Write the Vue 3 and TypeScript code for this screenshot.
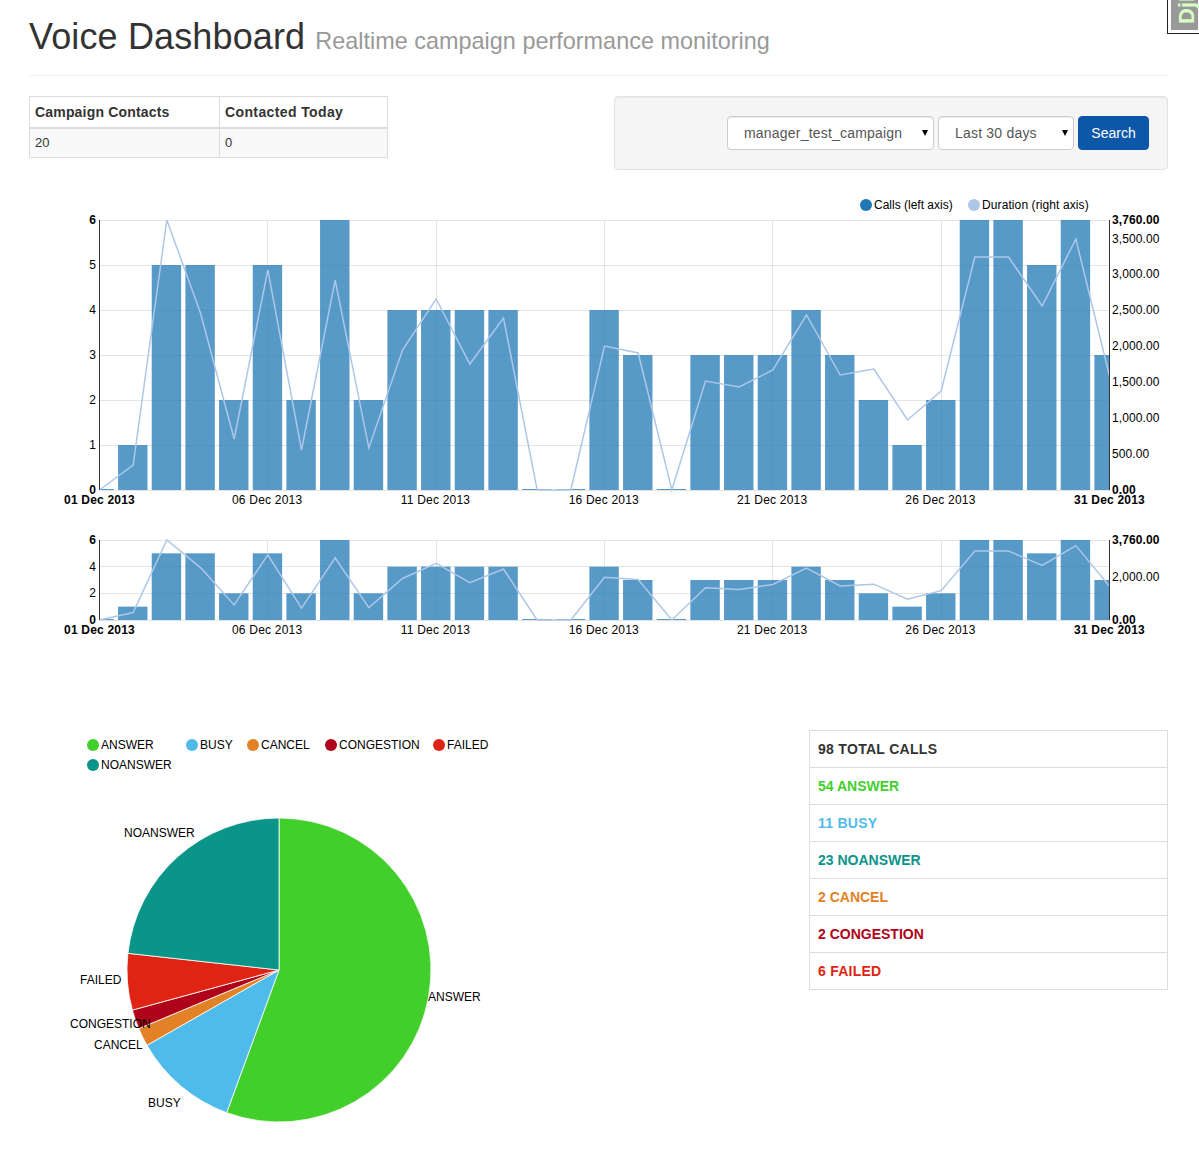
<template>
  <div class="page">
    <!-- debug toolbar handle -->
    <div class="debug-handle"><span class="debug-text">DjDT</span></div>

    <div class="page-header">
      <h1><span class="title">Voice Dashboard</span> <small>Realtime campaign performance monitoring</small></h1>
    </div>

    <div class="top-row">
      <table class="stats">
        <thead>
          <tr>
            <th class="col-a">Campaign Contacts</th>
            <th class="col-b">Contacted Today</th>
          </tr>
        </thead>
        <tbody>
          <tr>
            <td>20</td>
            <td>0</td>
          </tr>
        </tbody>
      </table>

      <form class="well" @submit.prevent>
        <div class="select-wrap">
          <select class="form-control campaign">
            <option>manager_test_campaign</option>
          </select>
        </div>
        <div class="select-wrap">
          <select class="form-control range">
            <option>Last 30 days</option>
          </select>
        </div>
        <button class="btn" type="submit">Search</button>
      </form>
    </div>

    <!-- focus chart -->
    <svg class="chart main-chart" width="1139" height="320" viewBox="29 190 1139 320">
      <defs>
        <clipPath id="mainClip"><rect x="99.5" y="220" width="1010" height="270" /></clipPath>
      </defs>
      <g class="legend">
        <circle cx="866" cy="205" r="6" fill="#1f77b4" />
        <text x="874" y="209">Calls (left axis)</text>
        <circle cx="974" cy="205" r="6" fill="#aec7e8" />
        <text x="982" y="209" class="wide">Duration (right axis)</text>
      </g>
      <line v-for="t in mainLeft" :key="'g' + t" class="grid" x1="99.5" x2="1109.5" :y1="yMain(t)" :y2="yMain(t)" />
      <line v-for="d in tickDays" :key="'v' + d" class="grid" :x1="dayX(d)" :x2="dayX(d)" y1="220" y2="490" />
      <g clip-path="url(#mainClip)">
        <rect
          v-for="(c, i) in calls"
          :key="'b' + i"
          class="bar"
          :x="barX(i)"
          :y="c ? yMain(c) : 489"
          :width="barW"
          :height="c ? 45 * c : 1"
        />
      </g>
      <polyline class="line" :points="mainLine" />
      <line class="axis" x1="99.5" x2="99.5" y1="220" y2="490" />
      <line class="axis" x1="1109.5" x2="1109.5" y1="220" y2="490" />
      <text v-for="t in mainLeft" :key="'l' + t" class="left-tick" :class="{ bold: t === 0 || t === 6 }" x="96" :y="yMain(t) + 4">{{ t }}</text>
      <text v-for="t in mainRight" :key="'r' + t" class="right-tick" :class="{ bold: t === 0 || t === 3760 }" x="1112" :y="490 - (t / 3760) * 270 + 3.9">{{ money(t) }}</text>
      <text v-for="d in tickDays" :key="'x' + d" class="date" :x="dayX(d) - 0.7" y="504">{{ d + 1 < 10 ? '0' + (d + 1) : d + 1 }} Dec 2013</text>
      <text class="date bold" x="99.5" y="504">01 Dec 2013</text>
      <text class="date bold" x="1109.5" y="504">31 Dec 2013</text>
    </svg>

    <!-- context chart -->
    <svg class="chart mini-chart" width="1139" height="110" viewBox="29 530 1139 110">
      <defs>
        <clipPath id="miniClip"><rect x="99.5" y="540" width="1010" height="80" /></clipPath>
      </defs>
      <line v-for="t in miniLeft" :key="'g' + t" class="grid" x1="99.5" x2="1109.5" :y1="yMini(t)" :y2="yMini(t)" />
      <line v-for="d in tickDays" :key="'v' + d" class="grid" :x1="dayX(d)" :x2="dayX(d)" y1="540" y2="620" />
      <g clip-path="url(#miniClip)">
        <rect
          v-for="(c, i) in calls"
          :key="'b' + i"
          class="bar"
          :x="barX(i)"
          :y="c ? yMini(c) : 619"
          :width="barW"
          :height="c ? (80 / 6) * c : 1"
        />
      </g>
      <polyline class="line" :points="miniLine" />
      <line class="axis" x1="99.5" x2="99.5" y1="540" y2="620" />
      <line class="axis" x1="1109.5" x2="1109.5" y1="540" y2="620" />
      <text v-for="t in miniLeft" :key="'l' + t" class="left-tick" :class="{ bold: t === 0 || t === 6 }" x="96" :y="yMini(t) + 4">{{ t }}</text>
      <text class="right-tick bold" x="1112" y="544">3,760.00</text>
      <text class="right-tick" x="1112" y="581">2,000.00</text>
      <text class="right-tick bold" x="1112" y="624">0.00</text>
      <text v-for="d in tickDays" :key="'x' + d" class="date" :x="dayX(d) - 0.7" y="634">{{ d + 1 < 10 ? '0' + (d + 1) : d + 1 }} Dec 2013</text>
      <text class="date bold" x="99.5" y="634">01 Dec 2013</text>
      <text class="date bold" x="1109.5" y="634">31 Dec 2013</text>
    </svg>

    <div class="bottom-row">
      <svg class="pie" width="480" height="423" viewBox="29 730 480 423">
        <g v-for="item in legend" :key="item.name">
          <circle :cx="item.x" :cy="item.y" r="6" :fill="item.color" />
          <text :x="item.x + 8" :y="item.y + 4">{{ item.name }}</text>
        </g>
        <path v-for="s in slices" :key="s.name" :d="s.d" :fill="s.color" class="slice" />
        <text v-for="l in pieLabels" :key="l.name" :x="l.x" :y="l.y">{{ l.name }}</text>
      </svg>

      <ul class="list-group">
        <li class="total">98 TOTAL CALLS</li>
        <li v-for="r in summary" :key="r.name" :class="r.name.toLowerCase()" :style="{ color: r.color }">{{ r.count }} {{ r.name }}</li>
      </ul>
    </div>
  </div>
</template>

<script setup lang="ts">
import { computed } from 'vue'

const calls = [0, 1, 5, 5, 2, 5, 2, 6, 2, 4, 4, 4, 4, 0, 0, 4, 3, 0, 3, 3, 3, 4, 3, 2, 1, 2, 6, 6, 5, 6, 3]
const duration = [
  0, 348, 3760, 2465, 710, 3064, 557, 2924, 585, 1950, 2660, 1755, 2395, 0, 0, 2005, 1908, 0, 1518, 1434, 1671, 2437,
  1601, 1685, 975, 1379, 3245, 3245, 2562, 3495, 1588
]

const tickDays = [5, 10, 15, 20, 25]
const mainLeft = [0, 1, 2, 3, 4, 5, 6]
const miniLeft = [0, 2, 4, 6]
const mainRight = [0, 500, 1000, 1500, 2000, 2500, 3000, 3500, 3760]

const step = 1010 / 30
const barW = 29.4

const dayX = (d: number) => 99.5 + d * step
const barX = (i: number) => 84.4 + i * step
const yMain = (v: number) => 490 - v * 45
const yMini = (v: number) => 620 - (v * 80) / 6
const money = (v: number) => v.toLocaleString('en-US', { minimumFractionDigits: 2 })

const mainLine = computed(() => duration.map((v, i) => `${dayX(i)},${490 - (v / 3760) * 270}`).join(' '))
const miniLine = computed(() => duration.map((v, i) => `${dayX(i)},${620 - (v / 3760) * 80}`).join(' '))

const colors = {
  ANSWER: '#42cf2c',
  BUSY: '#4fbbea',
  CANCEL: '#e28125',
  CONGESTION: '#ae0318',
  FAILED: '#e02414',
  NOANSWER: '#0b9488'
}

const legend = [
  { name: 'ANSWER', x: 93, y: 745, color: colors.ANSWER },
  { name: 'BUSY', x: 192, y: 745, color: colors.BUSY },
  { name: 'CANCEL', x: 253, y: 745, color: colors.CANCEL },
  { name: 'CONGESTION', x: 331, y: 745, color: colors.CONGESTION },
  { name: 'FAILED', x: 439, y: 745, color: colors.FAILED },
  { name: 'NOANSWER', x: 93, y: 765, color: colors.NOANSWER }
]

const pieLabels = [
  { name: 'NOANSWER', x: 124, y: 837 },
  { name: 'ANSWER', x: 428, y: 1001 },
  { name: 'BUSY', x: 148, y: 1107 },
  { name: 'CANCEL', x: 94, y: 1049 },
  { name: 'CONGESTION', x: 70, y: 1028 },
  { name: 'FAILED', x: 80, y: 984 }
]

// shares read off the drawn wedges, in percent of the circle
const pieData = [
  { name: 'ANSWER', share: 55.6, color: colors.ANSWER },
  { name: 'BUSY', share: 11.15, color: colors.BUSY },
  { name: 'CANCEL', share: 1.95, color: colors.CANCEL },
  { name: 'CONGESTION', share: 2.05, color: colors.CONGESTION },
  { name: 'FAILED', share: 6, color: colors.FAILED },
  { name: 'NOANSWER', share: 23.25, color: colors.NOANSWER }
]

// wedges run clockwise from 12 o'clock
const slices = computed(() => {
  const cx = 279
  const cy = 970
  const r = 152
  let start = 0
  return pieData.map((p) => {
    const end = start + (p.share / 100) * Math.PI * 2
    const x0 = cx + r * Math.sin(start)
    const y0 = cy - r * Math.cos(start)
    const x1 = cx + r * Math.sin(end)
    const y1 = cy - r * Math.cos(end)
    const large = end - start > Math.PI ? 1 : 0
    start = end
    return { name: p.name, color: p.color, d: `M${cx},${cy}L${x0},${y0}A${r},${r} 0 ${large} 1 ${x1},${y1}Z` }
  })
})

const summary = [
  { count: 54, name: 'ANSWER', color: colors.ANSWER },
  { count: 11, name: 'BUSY', color: colors.BUSY },
  { count: 23, name: 'NOANSWER', color: colors.NOANSWER },
  { count: 2, name: 'CANCEL', color: colors.CANCEL },
  { count: 2, name: 'CONGESTION', color: colors.CONGESTION },
  { count: 6, name: 'FAILED', color: colors.FAILED }
]
</script>

<style scoped>
.page {
  position: relative;
  box-sizing: border-box;
  width: 1199px;
  height: 1173px;
  padding: 0 31px 0 29px;
  overflow: hidden;
  background: #fff;
  color: #333;
  font-family: 'Liberation Sans', Arial, sans-serif;
  font-size: 14px;
  line-height: 20px;
}

.debug-handle {
  position: absolute;
  top: 0;
  right: 0;
  width: 32px;
  height: 34px;
  box-sizing: border-box;
  overflow: hidden;
  background: #999;
  border: 1px solid #222;
  border-top: 0;
  border-right: 0;
  box-shadow: inset 3px 0 0 #fff, inset 0 -3px 0 #fff, inset -1px 0 0 #fff;
}

.debug-text {
  position: absolute;
  left: 8px;
  bottom: 9px;
  display: block;
  color: #d8ffc4;
  font-size: 22px;
  font-weight: bold;
  line-height: 22px;
  white-space: nowrap;
  transform-origin: 0 100%;
  transform: translate(22px, 0) rotate(-90deg);
}

.page-header {
  height: 75px;
  border-bottom: 1px solid #eee;
}

h1 {
  margin: 0;
  padding-top: 17px;
  color: #333;
  font-size: 36px;
  font-weight: 500;
  line-height: 39.6px;
}

.title {
  letter-spacing: 0.14px;
}

small {
  color: #999;
  font-size: 23.4px;
  font-weight: normal;
  line-height: 1;
  letter-spacing: 0.02px;
}

.top-row {
  display: flex;
  justify-content: space-between;
  align-items: flex-start;
  margin-top: 20px;
}

.stats {
  width: 359px;
  border-collapse: collapse;
  border: 1px solid #ddd;
}

.stats th,
.stats td {
  box-sizing: border-box;
  padding: 5px;
  border: 1px solid #ddd;
  text-align: left;
  font-size: 14px;
  line-height: 20px;
}

.stats th {
  height: 31px;
  border-bottom-width: 2px;
}

.stats td {
  height: 29px;
  padding: 4px 5px;
  background: #f9f9f9;
  font-size: 13px;
}

.stats .col-a {
  width: 190px;
  letter-spacing: 0.18px;
}

.stats .col-b {
  letter-spacing: 0.38px;
}

.well {
  display: flex;
  justify-content: flex-end;
  gap: 4px;
  box-sizing: border-box;
  width: 554px;
  height: 74px;
  padding: 19px 18px 19px 19px;
  background: #f5f5f5;
  border: 1px solid #e3e3e3;
  border-radius: 4px;
  box-shadow: inset 0 1px 1px rgba(0, 0, 0, 0.05);
}

.select-wrap {
  position: relative;
  height: 34px;
}

/* small solid arrow of the native control */
.select-wrap::after {
  content: '';
  position: absolute;
  top: 14px;
  right: 6px;
  border-top: 6px solid #000;
  border-left: 3.5px solid transparent;
  border-right: 3.5px solid transparent;
  pointer-events: none;
}

.form-control {
  display: block;
  box-sizing: border-box;
  height: 34px;
  padding: 6px 12px 6px 16px;
  appearance: none;
  background: #fff;
  border: 1px solid #ccc;
  border-radius: 4px;
  box-shadow: inset 0 1px 1px rgba(0, 0, 0, 0.075);
  color: #555;
  font-family: inherit;
  font-size: 14px;
  letter-spacing: 0.2px;
}

.campaign {
  width: 207px;
}

.range {
  width: 136px;
}

.btn {
  width: 71px;
  height: 34px;
  padding: 0;
  background: #0d57a8;
  border: 1px solid #0d57a8;
  border-radius: 4px;
  color: #fff;
  font-family: inherit;
  font-size: 14px;
}

.chart {
  display: block;
  overflow: visible;
}

.main-chart {
  margin-top: 20px;
}

.mini-chart {
  margin-top: 20px;
}

svg text {
  fill: #000;
  font-family: 'Liberation Sans', Arial, sans-serif;
  font-size: 12px;
}

.wide {
  letter-spacing: 0.1px;
}

.grid {
  stroke: #e5e5e5;
  stroke-width: 1;
  shape-rendering: crispEdges;
}

.axis {
  stroke: #333;
  stroke-width: 1;
  shape-rendering: crispEdges;
}

.bar {
  fill: #1f77b4;
  fill-opacity: 0.75;
}

.line {
  fill: none;
  stroke: #aec7e8;
  stroke-width: 1.5;
}

.left-tick {
  text-anchor: end;
}

.right-tick {
  letter-spacing: 0.1px;
}

.date {
  text-anchor: middle;
  letter-spacing: 0.2px;
}

.bold {
  font-weight: bold;
}

.bottom-row {
  display: flex;
  justify-content: space-between;
  align-items: flex-start;
  margin-top: 90px;
}

.slice {
  stroke: #fff;
  stroke-width: 1;
  stroke-opacity: 0.8;
}

.list-group {
  box-sizing: border-box;
  width: 359px;
  margin: 0;
  padding: 0;
  list-style: none;
  border: 1px solid #ddd;
  border-bottom: 0;
  font-size: 14px;
  font-weight: bold;
}

.list-group li {
  height: 37px;
  box-sizing: border-box;
  padding: 8px;
  border-bottom: 1px solid #ddd;
  line-height: 20px;
}

.list-group .busy {
  letter-spacing: 0.25px;
}

.list-group .failed {
  letter-spacing: 0.25px;
}

.total {
  color: #333;
  letter-spacing: 0.3px;
}
</style>
